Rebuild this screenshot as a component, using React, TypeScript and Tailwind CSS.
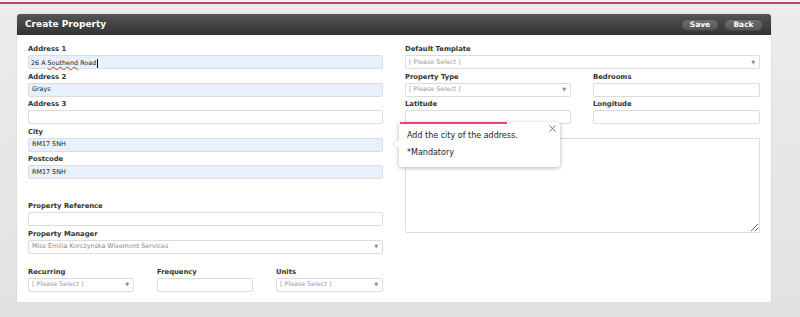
import React from "react";

const font = { fontFamily: '"DejaVu Sans", Verdana, sans-serif' };

function Label({ children }: { children?: React.ReactNode }) {
  return (
    <div className="h-[13.5px] flex items-end pb-[2px] text-[6.8px] font-bold text-[#333] leading-none">
      {children}
    </div>
  );
}

function Input({ value, filled, w }: { value?: string; filled?: boolean; w?: string }) {
  return (
    <div
      className={`h-[14px] border border-[#dcdcdc] rounded-[2px] flex items-center px-[3px] text-[6.4px] text-[#222] leading-none ${
        filled ? "bg-[#e8f0fe]" : "bg-white"
      } ${w ?? "w-full"}`}
    >
      {value}
    </div>
  );
}

function Select({ value, placeholder = true }: { value?: string; placeholder?: boolean }) {
  return (
    <div className="h-[14px] w-full border border-[#dcdcdc] rounded-[2px] flex items-center justify-between px-[3px] bg-white text-[6.4px] leading-none">
      <span className={placeholder ? "text-[#9a9a9a]" : "text-[#888]"}>{value ?? "[ Please Select ]"}</span>
      <span className="text-[5px] text-[#888] pr-[1px]">▼</span>
    </div>
  );
}

function Field({ label, children }: { label: string; children: React.ReactNode }) {
  return (
    <div>
      <Label>{label}</Label>
      {children}
    </div>
  );
}

export default function App() {
  return (
    <div
      className="w-[800px] h-[317px] overflow-hidden relative bg-gradient-to-b from-[#ececec] to-[#e2e2e2]"
      style={font}
    >
      <div className="h-[2px] bg-[#f4f4f4]" />
      <div className="h-[1.5px] bg-[#b8476f]" />
      <div className="flex pt-[10.5px]">
        <div className="ml-[17px] w-[754px] bg-white rounded-t-[3px] shadow-[0_0_2px_rgba(0,0,0,0.12)]">
          {/* header */}
          <div className="h-[21px] rounded-t-[3px] bg-gradient-to-b from-[#555] to-[#333] flex items-center justify-between pl-[8px] pr-[8px]">
            <span className="text-white font-bold text-[9px] leading-none">Create Property</span>
            <div className="flex gap-[5px]">
              <div className="h-[12px] w-[38px] rounded-full bg-gradient-to-b from-[#707070] to-[#555] border border-[#444] flex items-center justify-center text-white font-bold text-[7.5px] leading-none">
                Save
              </div>
              <div className="h-[12px] w-[39px] rounded-full bg-gradient-to-b from-[#707070] to-[#555] border border-[#444] flex items-center justify-center text-white font-bold text-[7.5px] leading-none">
                Back
              </div>
            </div>
          </div>
          {/* body */}
          <div className="relative flex gap-[22px] px-[11px] pt-[6.5px] pb-[10px]">
            <div className="w-[355px] flex flex-col">
              <Field label="Address 1">
                <Input filled value={undefined} />
              </Field>
              <Field label="Address 2">
                <Input filled value="Grays" />
              </Field>
              <Field label="Address 3">
                <Input />
              </Field>
              <Field label="City">
                <Input filled value="RM17 5NH" />
              </Field>
              <Field label="Postcode">
                <Input filled value="RM17 5NH" />
              </Field>
              <div className="h-[19.5px]" />
              <Field label="Property Reference">
                <Input />
              </Field>
              <Field label="Property Manager">
                <Select value="Miss Emilia Korczynska Wisemont Services" placeholder={false} />
              </Field>
              <div className="h-[10.5px]" />
              <div className="flex justify-between">
                <div className="w-[106px]">
                  <Label>Recurring</Label>
                  <Select />
                </div>
                <div className="w-[96px]">
                  <Label>Frequency</Label>
                  <Input />
                </div>
                <div className="w-[107px]">
                  <Label>Units</Label>
                  <Select />
                </div>
              </div>
            </div>
            <div className="w-[355px] flex flex-col">
              <Field label="Default Template">
                <Select />
              </Field>
              <div className="flex justify-between">
                <div className="w-[166px]">
                  <Label>Property Type</Label>
                  <Select />
                </div>
                <div className="w-[167px]">
                  <Label>Bedrooms</Label>
                  <Input />
                </div>
              </div>
              <div className="flex justify-between">
                <div className="w-[166px]">
                  <Label>Latitude</Label>
                  <Input />
                </div>
                <div className="w-[167px]">
                  <Label>Longitude</Label>
                  <Input />
                </div>
              </div>
              <Label />
              <textarea className="h-[95px] w-full border border-[#dcdcdc] rounded-[2px] bg-white outline-none" />
            </div>
            {/* tooltip */}
            <div className="absolute left-[382px] top-[87px] w-[161px] h-[45px] bg-white rounded-[3px] shadow-[0_1px_4px_rgba(0,0,0,0.3)] text-[8px] text-[#222] leading-none">
              <div className="absolute left-[1px] top-0 w-[107px] h-[1.5px] bg-[#e2457c]" />
              <div className="absolute -left-[5px] top-[16px] w-0 h-0 border-y-[6px] border-y-transparent border-r-[6px] border-r-white drop-shadow-[-1px_0_0_rgba(0,0,0,0.12)]" />
              <svg className="absolute right-[4px] top-[3px]" width="7" height="7" viewBox="0 0 7 7">
                <path d="M0.5 0.5 L6.5 6.5 M6.5 0.5 L0.5 6.5" stroke="#666" strokeWidth="0.9" />
              </svg>
              <div className="pl-[8px] pt-[10px]">Add the city of the address.</div>
              <div className="pl-[8px] pt-[9px]">*Mandatory</div>
            </div>
          </div>
        </div>
      </div>
      {/* address 1 text with caret & spell-check underline */}
      <div className="absolute left-[31px] top-[58.5px] text-[6.4px] text-[#222] leading-none flex items-center">
        <span>26 A </span>
        <span className="underline decoration-wavy decoration-[#d33] decoration-[0.5px] underline-offset-[1px] ml-[2px]">Southend</span>
        <span className="ml-[2px]">Road</span>
        <span className="w-[0.8px] h-[9px] bg-black ml-[0.5px]" />
      </div>
    </div>
  );
}
